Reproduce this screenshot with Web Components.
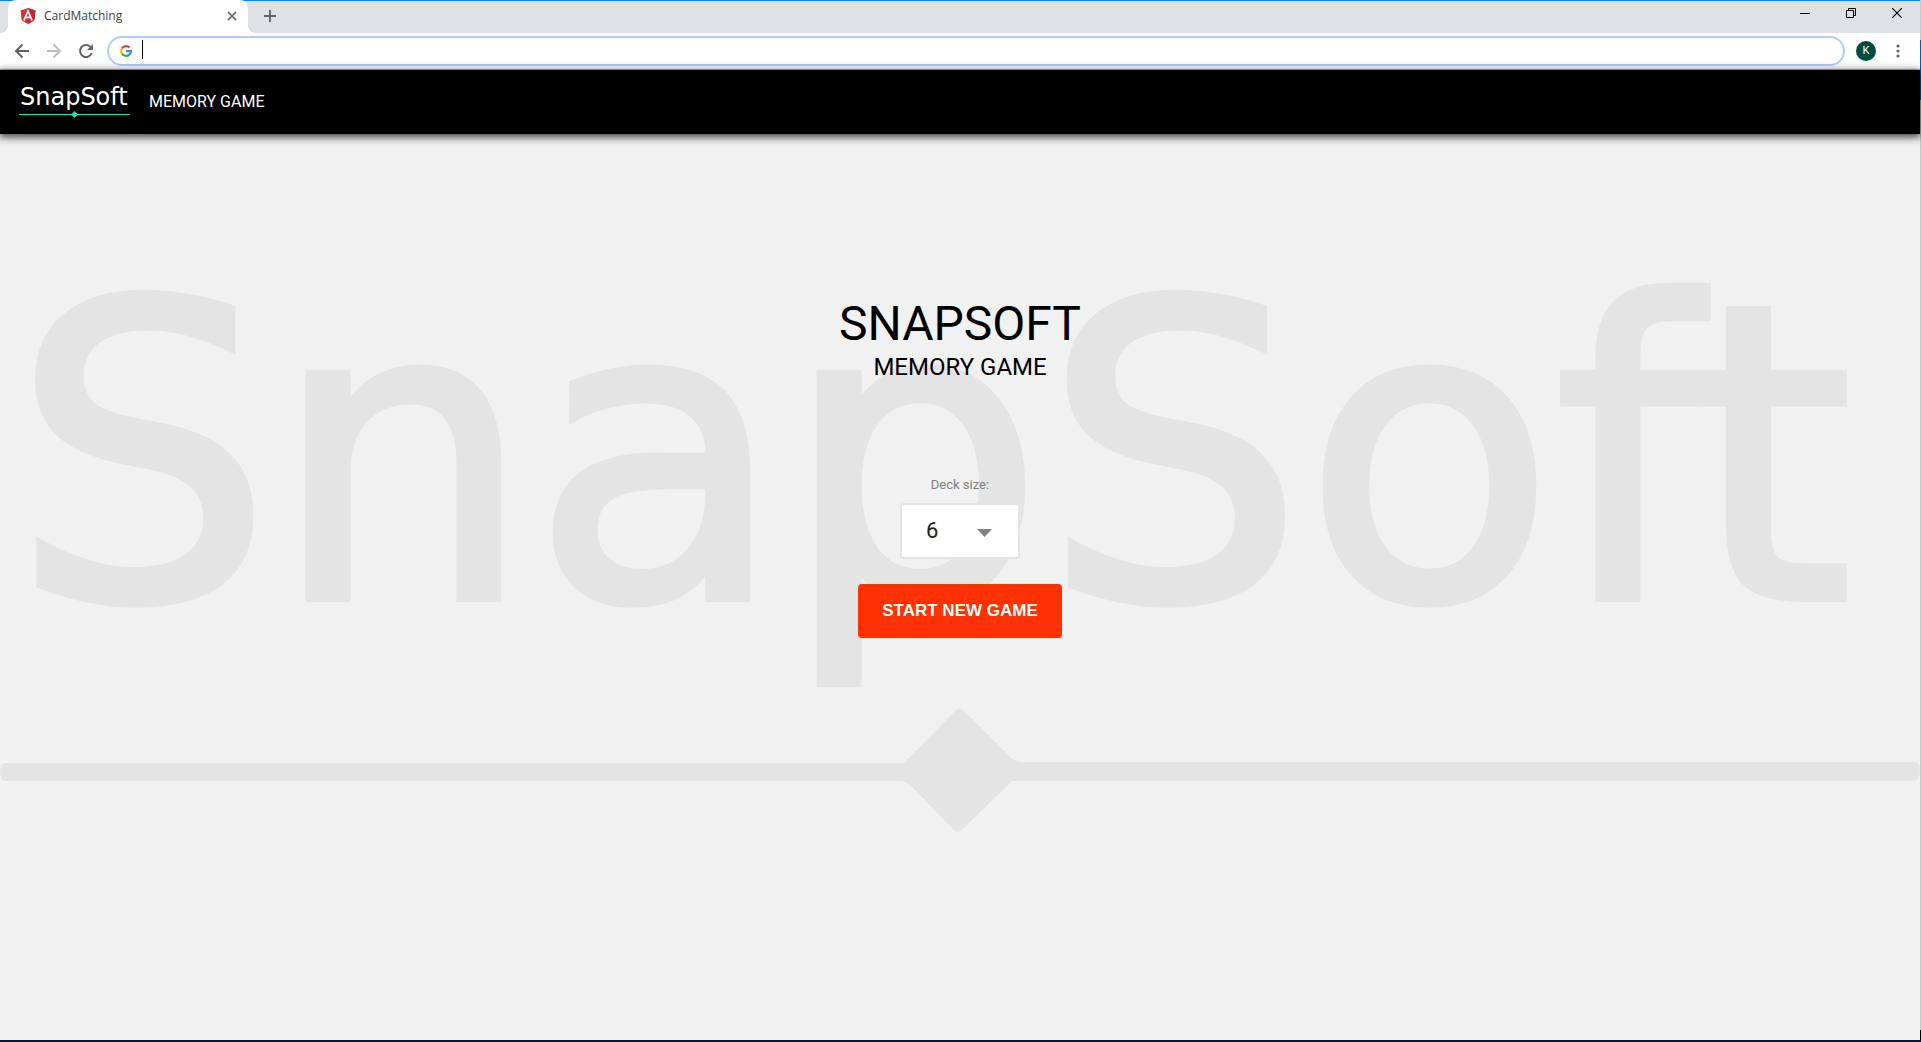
<!DOCTYPE html>
<html lang="en">
<head>
<meta charset="utf-8">
<title>CardMatching</title>
<style>
  html, body { height: 100%; margin: 0; }
  body { font-family: Roboto, "Liberation Sans", sans-serif; background: #f1f1f1; overflow: hidden; }
</style>
</head>
<body>
<desktop-window>
  <browser-tabs slot="tabs">CardMatching</browser-tabs>
  <browser-toolbar slot="toolbar">K</browser-toolbar>
  <game-page>
    <game-header slot="header">MEMORY GAME</game-header>
    <game-start>
      <span slot="title">SNAPSOFT</span>
      <span slot="subtitle">MEMORY GAME</span>
    </game-start>
  </game-page>
</desktop-window>

<script>
function define(name, markup) {
  const template = document.createElement('template');
  template.innerHTML = '<style>*{box-sizing:border-box}button{font:inherit;border:0;padding:0;margin:0;background:none;color:inherit}svg{display:block}</style>' + markup;
  customElements.define(name, class extends HTMLElement {
    constructor() {
      super();
      this.attachShadow({ mode: 'open' }).append(template.content.cloneNode(true));
    }
  });
}

define('desktop-window', `
<style>
  :host { display: grid; height: 100vh; grid-template-columns: 1fr 1px; grid-template-rows: 1fr 2px; background: #001a38; }
  .window { display: flex; flex-direction: column; min-width: 0; min-height: 0; }
  .edge { background: linear-gradient(#c8c8c8 40px, #0a5ca5 40px 100px, #c8c8c8 100px calc(100% - 10px), #000 calc(100% - 10px)); }
</style>
<div class="window"><slot name="tabs"></slot><slot name="toolbar"></slot><slot></slot></div>
<div class="edge"></div>`);

define('browser-tabs', `
<style>
  :host { display: flex; height: 33px; flex: none; background: #dee1e6; box-shadow: inset 0 1px #1a80d8; color: #3c4043; font: 12px/16px "Open Sans", sans-serif; padding-left: 8px; }
  .tab { position: relative; display: flex; align-items: center; width: 240px; background: #fff; border-radius: 8px 8px 0 0; padding: 0 8px 1px 12px; gap: 8px; }
  .tab::before, .tab::after { content: ""; position: absolute; bottom: 0; width: 8px; height: 8px; }
  .tab::before { left: -8px; background: radial-gradient(circle at 0 0, transparent 8px, #fff 8px); }
  .tab::after { right: -8px; background: radial-gradient(circle at 100% 0, transparent 8px, #fff 8px); }
  .name { flex: 1; }
  button { display: grid; place-items: center; }
  .close { width: 16px; height: 16px; }
  .new { width: 28px; margin: 0 auto 1px 8px; }
  .win { width: 46px; height: 26px; }
</style>
<div class="tab">
  <svg width="16" height="16" viewBox="0 0 16 16"><path fill="#dd3035" d="M8 0l7.500 2.600-1.200 9.600L8 16l-6.300-3.800L.5 2.600z"/><path fill="#b72c31" d="M8 0l7.500 2.600-1.200 9.600L8 16z"/><path fill="none" stroke="#fff" stroke-width="1.700" d="M4 12.300L8 3l4 9.300M5.500 9.300h5"/></svg>
  <span class="name"><slot></slot></span>
  <button class="close" aria-label="Close tab"><svg width="10" height="10" viewBox="0 0 10 10"><path d="M1 1l8 8M9 1L1 9" stroke="#5f6368" stroke-width="1.700"/></svg></button>
</div>
<button class="new" aria-label="New tab"><svg width="12" height="12" viewBox="0 0 12 12"><path d="M6 0v12M0 6h12" stroke="#5f6368" stroke-width="1.800"/></svg></button>
<button class="win" aria-label="Minimize"><svg width="10" height="10" viewBox="0 0 10 10"><path d="M0 5.500h10" stroke="#000"/></svg></button>
<button class="win" aria-label="Restore"><svg width="10" height="10" viewBox="0 0 10 10"><path d="M.5 2.500h7v7h-7zM2.500 2.500v-2h7v7h-2" fill="none" stroke="#000"/></svg></button>
<button class="win" aria-label="Close"><svg width="10" height="10" viewBox="0 0 10 10"><path d="M0 0l10 10M10 0L0 10" stroke="#000" stroke-width="1.200"/></svg></button>`);

define('browser-toolbar', `
<style>
  :host { display: flex; align-items: center; flex: none; box-sizing: border-box; height: 37px; background: #fff; border-bottom: 1px solid #b6b4b6; padding: 0 6px; color: #5f6368; }
  button { display: grid; place-items: center; width: 32px; height: 28px; }
  .address { flex: 1; display: flex; align-items: center; height: 30px; margin: 0 11px 0 5px; padding-left: 11px; border: 2px solid #b0ccfb; border-radius: 15px; }
  .caret { width: 1px; height: 19px; margin: 0 0 3px 10px; background: #000; }
  input { flex: 1; min-width: 0; border: 0; outline: 0; background: none; padding: 0; font: 14px "Open Sans", sans-serif; }
  .avatar { width: 20px; height: 20px; border-radius: 50%; background: #004d40; color: #fff; font: 11px/20px Roboto, sans-serif; }
  .menu { margin-left: 6px; }
</style>
<button aria-label="Back"><svg width="16" height="16" viewBox="0 0 16 16"><path d="M15 8H2M8.500 1.500L2 8l6.500 6.500" fill="none" stroke="#5f6368" stroke-width="2"/></svg></button>
<button aria-label="Forward"><svg width="16" height="16" viewBox="0 0 16 16"><path d="M1 8h13M7.500 1.500L14 8l-6.500 6.500" fill="none" stroke="#bbbdbf" stroke-width="2"/></svg></button>
<button aria-label="Reload"><svg width="16" height="16" viewBox="0 0 16 16"><path d="M13.700 10A6 6 0 1 1 12.300 3.800" fill="none" stroke="#5f6368" stroke-width="2"/><path d="M15 1v6H9z" fill="#5f6368"/></svg></button>
<div class="address">
  <svg width="12" height="12" viewBox="0 0 12 12" fill="none" stroke-width="2.200"><path d="M1.900 3.500A4.900 4.900 0 0 1 9.600 2.600" stroke="#ea4335"/><path d="M1.900 8.500A4.900 4.900 0 0 1 1.900 3.500" stroke="#fbbc05"/><path d="M9.300 9.600A4.900 4.900 0 0 1 1.900 8.500" stroke="#34a853"/><path d="M6 6.100h4.900A4.900 4.900 0 0 1 9.300 9.600" stroke="#4285f4"/></svg>
  <span class="caret"></span><input type="text" aria-label="Address and search bar">
</div>
<button class="avatar" aria-label="Profile"><slot></slot></button>
<button class="menu" aria-label="Menu"><svg width="4" height="14" viewBox="0 0 4 14" fill="#5f6368"><circle cx="2" cy="2" r="1.600"/><circle cx="2" cy="7" r="1.600"/><circle cx="2" cy="12" r="1.600"/></svg></button>`);

define('game-page', `
<style>
  :host { flex: 1; min-height: 0; display: grid; grid-template: auto 1fr / 1fr; background: #f1f1f1; color: #000; }
  snap-watermark { grid-area: 1 / 1 / 3 / 2; align-self: center; }
  slot[name=header] { display: block; grid-area: 1 / 1; z-index: 1; }
  main { grid-area: 2 / 1; z-index: 1; }
</style>
<snap-watermark></snap-watermark>
<slot name="header"></slot>
<main><slot></slot></main>`);

define('snap-watermark', `
<style>
  :host { display: block; }
  svg { width: 100%; height: auto; overflow: visible; }
  text { font: 410px "DejaVu Sans", sans-serif; stroke: #e4e4e4; stroke-width: 8px; }
</style>
<svg viewBox="0 0 1920 558" fill="#e4e4e4" aria-hidden="true">
  <text x="12" y="322">SnapSoft</text>
  <path d="M6 487H904L955 435Q959 430 964 435L1010 481Q1015 486 1020 486H1914Q1920 486 1920 495T1914 505H1012L962 554Q958 558 954 554L912 511Q906 505 900 505H6Q0 505 0 496T6 487Z"/>
</svg>`);

define('game-header', `
<style>
  :host { display: flex; align-items: center; gap: 19px; height: 64px; padding-left: 19px; background: #000; color: #fff; box-shadow: 0 2px 8px 1px rgba(0,0,0,.75); font: 16px/24px Roboto, sans-serif; }
  svg { overflow: visible; }
  text { font: 24px "DejaVu Sans", sans-serif; }
</style>
<svg width="111" height="40" viewBox="0 0 111 40" role="img" aria-label="SnapSoft">
  <text x="1" y="23" fill="#fff">SnapSoft</text>
  <path d="M0 32.500h111" stroke="#1fdcb8"/><path d="M55.500 29l3.500 3.500-3.500 3.500-3.500-3.500z" fill="#1fdcb8"/>
</svg>
<span><slot></slot></span>`);

define('game-start', `
<style>
  :host { display: flex; flex-direction: column; align-items: center; padding-top: 163px; }
  h1 { margin: 0; font: 48px/54px Roboto, sans-serif; }
  h2 { margin: 0; font: 24px/32px Roboto, sans-serif; }
  form { display: flex; flex-direction: column; align-items: center; margin-top: 94px; }
  label { font: 13px/16px Roboto, sans-serif; color: #808080; }
  .select { display: grid; align-items: center; margin: 10px 0 25px; }
  select { grid-area: 1 / 1; appearance: none; width: 120px; height: 56px; margin: 0; padding: 0 24px; border: 2px solid #e4e4e4; border-radius: 4px; background: #fff; color: #212121; font: 22px/32px Roboto, sans-serif; }
  svg { grid-area: 1 / 1; justify-self: end; margin: 4px 28px 0 0; pointer-events: none; }
  button { height: 54px; padding: 0 24px; border-radius: 4px; background: #ff3100; color: #fff; font: bold 17px/24px "Liberation Sans", sans-serif; }
</style>
<h1><slot name="title"></slot></h1>
<h2><slot name="subtitle"></slot></h2>
<form>
  <label for="deck">Deck size:</label>
  <div class="select">
    <select id="deck"><option>6</option><option>8</option><option>10</option><option>12</option></select>
    <svg width="15" height="8" viewBox="0 0 15 8"><path d="M0 0h15L7.500 8z" fill="#808080"/></svg>
  </div>
  <button type="button">START NEW GAME</button>
</form>`);
</script>
</body>
</html>
